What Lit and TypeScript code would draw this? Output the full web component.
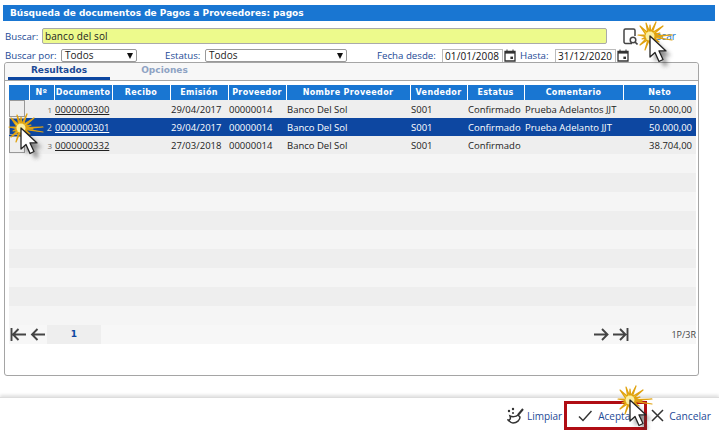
import { LitElement, html, css, svg } from "lit";
import { customElement } from "lit/decorators.js";

const rows = [
  { n: 1, doc: "0000000300", em: "29/04/2017", com: "Prueba Adelantos JJT", neto: "50.000,00" },
  { n: 2, doc: "0000000301", em: "29/04/2017", com: "Prueba Adelanto JJT", neto: "50.000,00", sel: true },
  { n: 3, doc: "0000000332", em: "27/03/2018", com: "", neto: "38.704,00" },
];
const heads = ["", "Nº", "Documento", "Recibo", "Emisión", "Proveedor", "Nombre Proveedor", "Vendedor", "Estatus", "Comentario", "Neto"];

const calendar = html`<svg class="cal" width="12" height="13" viewBox="0 0 12 13"><path d="M1 2.500h10v9.500H1z" fill="none" stroke="#333" stroke-width="1.300"/><path d="M1 2h10v2.600H1z" fill="#333"/><path d="M3 .5v2M9 .5v2" stroke="#333"/><rect x="6.400" y="7.600" width="2.600" height="2.400" fill="#333"/></svg>`;

function burst() {
  const rays = [[-12,-1],[-10,-10],[-4,-13],[0,-11],[6,-14],[13,-10],[10,-3],[22,-1],[12,1],[22,4],[9,6],[6,13],[0,8],[-5,14],[-10,9],[-8,3]];
  const pts = rays.map(([x,y])=>{
    const a = Math.atan2(y,x)+0.19;
    return `${x},${y} ${(Math.cos(a)*4).toFixed(1)},${(Math.sin(a)*4).toFixed(1)}`;
  }).join(" ");
  return svg`<polygon points=${pts} fill="#f6d93a" stroke="#e0a210" stroke-width="1.200" stroke-linejoin="round"/><circle r="4.500" fill="#fbeea0"/>`;
}

const pointer = (x: number, y: number) => html`<svg class="fx" style="left:${x - 26}px;top:${y - 22}px" width="60" height="60" viewBox="-26 -22 60 60">
  <defs><filter id="s" x="-50%" y="-50%" width="200%" height="200%"><feGaussianBlur stdDeviation="2.200"/></filter></defs>
  ${burst()}
  <path d="M2 2v21l5-4.500 4 9 4-2-4-8.600h7z" fill="#333" opacity=".55" filter="url(#s)" transform="translate(3 3)"/>
  <path d="M0 0v21l5-4.500 4 9 4-2-4-8.600h7z" fill="#fff" stroke="#222" stroke-width="1.300" stroke-linejoin="round"/>
</svg>`;

@customElement("app-root")
export class AppRoot extends LitElement {
  static styles = css`
    :host { display: block; position: relative; width: 719px; height: 430px; overflow: hidden; background: #fff;
      font-family: "Open Sans", "Noto Sans", sans-serif; font-size: 9.500px; color: #222; }
    .page { display: flex; flex-direction: column; height: 430px; padding-top: 5px; box-sizing: border-box; }
    .title { margin: 0 4px 0 3px; height: 16px; padding-left: 7px; background: #1976d2; color: #fff;
      font: bold 9px/16px "DejaVu Sans", sans-serif; }
    .search { display: flex; align-items: center; height: 16px; margin-top: 7px; padding-left: 5px; }
    .lbl { color: #1d4a96; font-size: 9.700px; white-space: nowrap; flex: none; }
    .w0 { width: 34px; }
    .q { margin-left: 3px; width: 565px; height: 16px; box-sizing: border-box; border: 1px solid #aaa; border-radius: 2px;
      background: #edfa8c; padding-left: 2px; line-height: 14px; font-size: 10px; letter-spacing: .1px; color: #222; }
    .btn { display: flex; align-items: center; margin-left: 16px; gap: 6px; color: #1976d2; font-size: 10px; }
    .filters { display: flex; align-items: center; height: 14px; margin-top: 4px; padding-left: 5px; }
    .w1 { width: 56px; }
    .w2 { width: 40px; margin-left: 28px; }
    .w3 { width: 65px; margin-left: 30px; }
    .w4 { width: 35px; margin-left: 4px; }
    .sel { display: flex; justify-content: space-between; align-items: center; box-sizing: border-box; height: 13px; border: 1px solid #999;
      border-radius: 2px; padding: 0 3px; font-size: 10px; line-height: 11px; color: #222; margin-top: 1px; background: #fff; }
    .sel i { border: 3.500px solid transparent; border-top: 6px solid #111; border-bottom: 0; }
    .s1 { width: 76px; }
    .s2 { width: 142px; }
    .date { box-sizing: border-box; width: 61px; height: 14px; border: 1px solid #bbb; margin-top: 1px; padding-left: 2px;
      line-height: 13px; font-size: 10px; letter-spacing: .1px; color: #111; white-space: nowrap; overflow: hidden; flex: none; }
    .cal { margin-left: 1px; flex: none; margin-top: 1px; }
    .panel { margin: 0 20px 0 4px; height: 314px; box-sizing: border-box; border: 1px solid #a5a5a5; border-radius: 3px; display: flex; flex-direction: column; padding: 0 2px 0 0; }
    .tabs { display: flex; height: 17px; margin-right: -2px; background: #f7f7f7; border-bottom: 1px solid #a5a5a5; font: bold 9px "DejaVu Sans", sans-serif; border-radius: 3px 3px 0 0; padding-left: 3px; }
    .tab { box-sizing: border-box; width: 102px; text-align: center; color: #1d4a96; border-bottom: 3px solid #0d47a1; height: 17px; line-height: 13px; padding-top: 1px; }
    .tab.off { color: #8ea3c4; border-bottom-color: transparent; width: 109px; }
    table { border-collapse: collapse; table-layout: fixed; width: 687px; margin: 4px 0 0 4px; }
    th { background: #1976d2; color: #fff; font: bold 8px "DejaVu Sans", sans-serif; letter-spacing: .35px; height: 15px; padding: 0; border-left: 1px solid #fff; white-space: nowrap; overflow: hidden; }
    th:first-child { border-left: 0; }
    td { height: 18px; padding: 0 0 0 1px; font-size: 9.500px; white-space: nowrap; overflow: hidden; box-sizing: border-box; background: #eee; color: #222; }
    tr.sel-row td { background: #0d47a1; color: #fff; }
    tr.sel-row a { color: #fff; }
    tr.blank td { height: 19px; }
    tr.light td { background: #f5f5f5; }
    td.no { text-align: right; font-size: 8px; color: #666; padding-right: 2px; }
    tr.sel-row td.no { color: #ddd; font-size: 9px; }
    td.num { text-align: right; padding-right: 4px; }
    td.boxc { padding: 0; vertical-align: top; }
    td a { color: #222; text-decoration: underline; }
    .box { width: 16px; border: 1px solid #999; box-sizing: border-box; height: 17px; }
    .pager { display: flex; align-items: center; height: 19px; width: 687px; margin-left: 4px; background: #f7f7f7; }
    .first { display: flex; width: 38px; padding-left: 1px; box-sizing: border-box; flex: none; align-items: center; }
    .pg { width: 54px; height: 19px; background: #eee; text-align: center; color: #0d47a1; font: bold 9px/19px "DejaVu Sans", sans-serif; flex: none; }
    .grow { flex: 1; }
    .last { display: flex; align-items: center; margin-right: 41px; }
    .count { color: #444; font-size: 9px; width: 26px; text-align: right; }
    .footer { margin-top: auto; height: 33px; border-top: 1px solid #ddd; box-shadow: 0 -2px 3px rgba(0,0,0,.12); display: flex; justify-content: flex-end; align-items: flex-end; box-sizing: border-box; padding-right: 8px; }
    .act { display: flex; align-items: center; color: #1d4a96; font-size: 10px; height: 29px; }
    .ok { box-sizing: border-box; width: 83px; border: 3px solid #b00d14; padding-left: 11px; gap: 6px; }
    .clean { gap: 3px; margin-right: 2px; }
    .cancel { gap: 5px; margin-left: 4px; font-size: 10.300px; }
    .fx { position: absolute; pointer-events: none; overflow: visible; }
  `;

  render() {
    const blanks = Array.from({ length: 9 }, (_, i) => i);
    return html`<div class="page">
      <div class="title">Búsqueda de documentos de Pagos a Proveedores: pagos</div>
      <div class="search">
        <span class="lbl w0">Buscar:</span>
        <div class="q">banco del sol</div>
        <div class="btn">
          <svg width="15" height="17" viewBox="0 0 15 17"><path d="M9 15.500H2.500a1.500 1.500 0 0 1-1.500-1.500V2.500A1.500 1.500 0 0 1 2.500 1h8a1.500 1.500 0 0 1 1.500 1.500V8" fill="none" stroke="#444" stroke-width="1.500"/><circle cx="10" cy="12" r="2.800" fill="#fff" stroke="#444" stroke-width="1.500"/><path d="M12 14l2.500 2.500" stroke="#444" stroke-width="1.600"/></svg>
          <span>Buscar</span>
        </div>
      </div>
      <div class="filters">
        <span class="lbl w1">Buscar por:</span>
        <div class="sel s1"><span>Todos</span><i></i></div>
        <span class="lbl w2">Estatus:</span>
        <div class="sel s2"><span>Todos</span><i></i></div>
        <span class="lbl w3">Fecha desde:</span>
        <div class="date">01/01/2008</div>${calendar}
        <span class="lbl w4">Hasta:</span>
        <div class="date">31/12/2020</div>${calendar}
      </div>
      <div class="panel">
        <div class="tabs"><div class="tab">Resultados</div><div class="tab off">Opciones</div></div>
        <table>
          <colgroup>
            ${[20, 25, 58, 58, 58, 58, 124, 57, 57, 99, 73].map((w) => html`<col style="width:${w}px" />`)}
          </colgroup>
          <thead><tr>${heads.map((h) => html`<th>${h}</th>`)}</tr></thead>
          <tbody>
            ${rows.map((r) => html`<tr class=${r.sel ? "sel-row" : ""}>
              <td class="boxc"><div class="box"></div></td>
              <td class="no">${r.n}</td>
              <td><a>${r.doc}</a></td>
              <td></td>
              <td>${r.em}</td>
              <td>00000014</td>
              <td>Banco Del Sol</td>
              <td>S001</td>
              <td>Confirmado</td>
              <td>${r.com}</td>
              <td class="num">${r.neto}</td>
            </tr>`)}
            ${blanks.map((i) => html`<tr class="blank ${i % 2 === 0 ? "light" : ""}">${heads.map(() => html`<td></td>`)}</tr>`)}
          </tbody>
        </table>
        <div class="pager">
          <div class="first">
            <svg width="17" height="13" viewBox="0 0 17 13"><path d="M1.500 0v13M16 6.500H3M8.500 1L3 6.500 8.500 12" fill="none" stroke="#444" stroke-width="1.900"/></svg>
            <svg width="16" height="13" viewBox="0 0 16 13" style="margin-left:3px"><path d="M15 6.500H2M7.500 1L2 6.500 7.500 12" fill="none" stroke="#444" stroke-width="1.900"/></svg>
          </div>
          <div class="pg">1</div>
          <div class="grow"></div>
          <div class="last">
            <svg width="15" height="13" viewBox="0 0 15 13"><path d="M0 6.500h13M8 1l5.500 5.500L8 12" fill="none" stroke="#444" stroke-width="1.900"/></svg>
            <svg width="16" height="13" viewBox="0 0 16 13" style="margin-left:4px"><path d="M0 6.500h12M7 1l5.500 5.500L7 12M14.500 0v13" fill="none" stroke="#444" stroke-width="1.900"/></svg>
          </div>
          <div class="count">1P/3R</div>
        </div>
      </div>
      <div class="footer">
        <div class="act clean">
          <svg width="17" height="17" viewBox="0 0 17 17"><path d="M16 2l-5 6" stroke="#333" stroke-width="2"/><path d="M3 9c2 1 6 1 8-1l2 2c0 3-3 6-7 6-2 0-4-2-5-3 2 0 3-1 2-4z" fill="none" stroke="#333" stroke-width="1.500"/><circle cx="2" cy="4" r="1.200" fill="#333"/><circle cx="6" cy="2" r="1.200" fill="#333"/><circle cx="6" cy="6" r="1" fill="#333"/></svg>
          <span>Limpiar</span>
        </div>
        <div class="act ok">
          <svg width="14" height="12" viewBox="0 0 14 12"><path d="M1 6.500l4 4L13.500 1" fill="none" stroke="#333" stroke-width="1.500"/></svg>
          <span>Aceptar</span>
        </div>
        <div class="act cancel">
          <svg width="13" height="13" viewBox="0 0 13 13"><path d="M1 1l11 11M12 1L1 12" stroke="#333" stroke-width="1.500"/></svg>
          <span>Cancelar</span>
        </div>
      </div>
    </div>
    ${pointer(650, 36)}${pointer(21, 128)}${pointer(630, 400)}`;
  }
}
